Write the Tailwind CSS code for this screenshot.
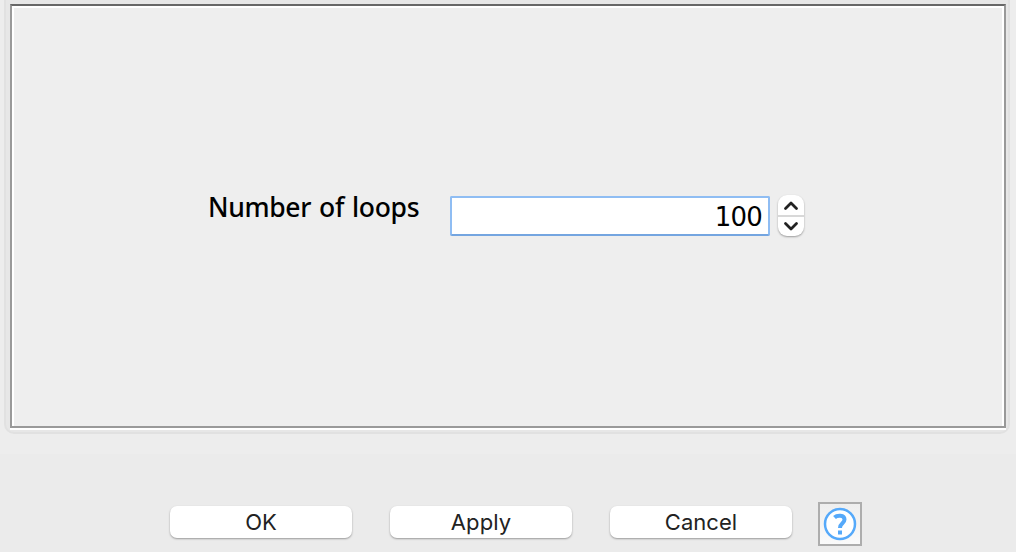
<!DOCTYPE html>
<html lang="en">
<head>
<meta charset="utf-8">
<title>Number of loops</title>
<script src="https://cdn.jsdelivr.net/npm/@tailwindcss/browser@4"></script>
</head>
<body class="w-[1016px] h-[552px] overflow-hidden bg-[#ebebeb] flex flex-col">
<main class="h-[454px] shrink-0 bg-[#ededed] pl-1 pr-[6px]">
  <section class="h-[434px] rounded-b-[10px] border-2 border-t-0 border-[#e1e1e1] bg-[#e7e7e7] pt-1 pl-1 pr-[2px]">
    <div class="w-[996px] h-[426px] border-b-2 border-white">
      <div class="h-[424px] border-2 border-[#999] border-t-[#676767]">
        <div class="h-[420px] border-2 border-b-0 border-white bg-[#eee] flex items-start pt-[188px] pl-[194px]">
          <label for="loops" class="w-[242px] mt-[-8px] h-[38px] leading-[38px] whitespace-nowrap font-['Noto_Sans',sans-serif] font-medium text-[26.5px] tracking-[-0.35px] [word-spacing:1.5px] text-black">Number of loops</label>
          <input id="loops" value="100" class="w-[320px] h-10 rounded-[2px] border-2 border-[#8fbdf3] border-b-[#74a5e0] bg-white pt-0.5 pr-[6px] text-right font-['DejaVu_Sans',sans-serif] text-[26px] tracking-[-0.8px] text-black outline-none">
          <div class="ml-2 mt-[-1px] w-[26px] h-[41px] rounded-[9px] bg-white shadow-[0_1px_2px_rgba(0,0,0,0.35)] flex flex-col">
            <button aria-label="Increase" class="h-5 flex justify-center items-center"><svg class="w-4 h-4" viewBox="0 0 16 16" fill="none" stroke="#222" stroke-width="2.8" stroke-linecap="round" stroke-linejoin="round"><path d="M2.500 11.500 8 6l5.500 5.500"/></svg></button>
            <span class="h-0.5 bg-[#d8d8d8]"></span>
            <button aria-label="Decrease" class="h-[19px] flex justify-center items-center"><svg class="w-4 h-4" viewBox="0 0 16 16" fill="none" stroke="#222" stroke-width="2.8" stroke-linecap="round" stroke-linejoin="round"><path d="M2.500 4.500 8 10l5.500-5.500"/></svg></button>
          </div>
        </div>
      </div>
    </div>
  </section>
</main>
<footer class="flex items-start pt-[52px] pl-[170px] font-['Inter',sans-serif] text-[22px] text-[#222]">
  <button class="w-[182px] h-8 mr-[38px] rounded-[7px] bg-white shadow-[0_1px_2px_rgba(0,0,0,0.35)] leading-8">OK</button>
  <button class="w-[182px] h-8 mr-[38px] rounded-[7px] bg-white shadow-[0_1px_2px_rgba(0,0,0,0.35)] leading-8 tracking-[0.1px]">Apply</button>
  <button class="w-[182px] h-8 mr-[26px] rounded-[7px] bg-white shadow-[0_1px_2px_rgba(0,0,0,0.35)] leading-8 tracking-[0.05px]">Cancel</button>
  <button aria-label="Help" class="mt-[-4px] w-11 h-11 border-2 border-[#adadad] bg-linear-to-b from-[#eeeeee] to-[#fafafa] flex items-center justify-center">
    <svg class="w-10 h-10" viewBox="0 0 40 40" fill="none" stroke="#55a9fa"><circle cx="20" cy="20" r="15" fill="#fff" stroke-width="2.5"/><path d="M14.500 13.500C17 11 24.500 10.500 24.500 15.500c0 4-4.500 3.500-4.500 8.500" stroke-width="4"/><path d="M18 26.500h4v4h-4z" fill="#55a9fa" stroke="none"/></svg>
  </button>
</footer>
</body>
</html>
